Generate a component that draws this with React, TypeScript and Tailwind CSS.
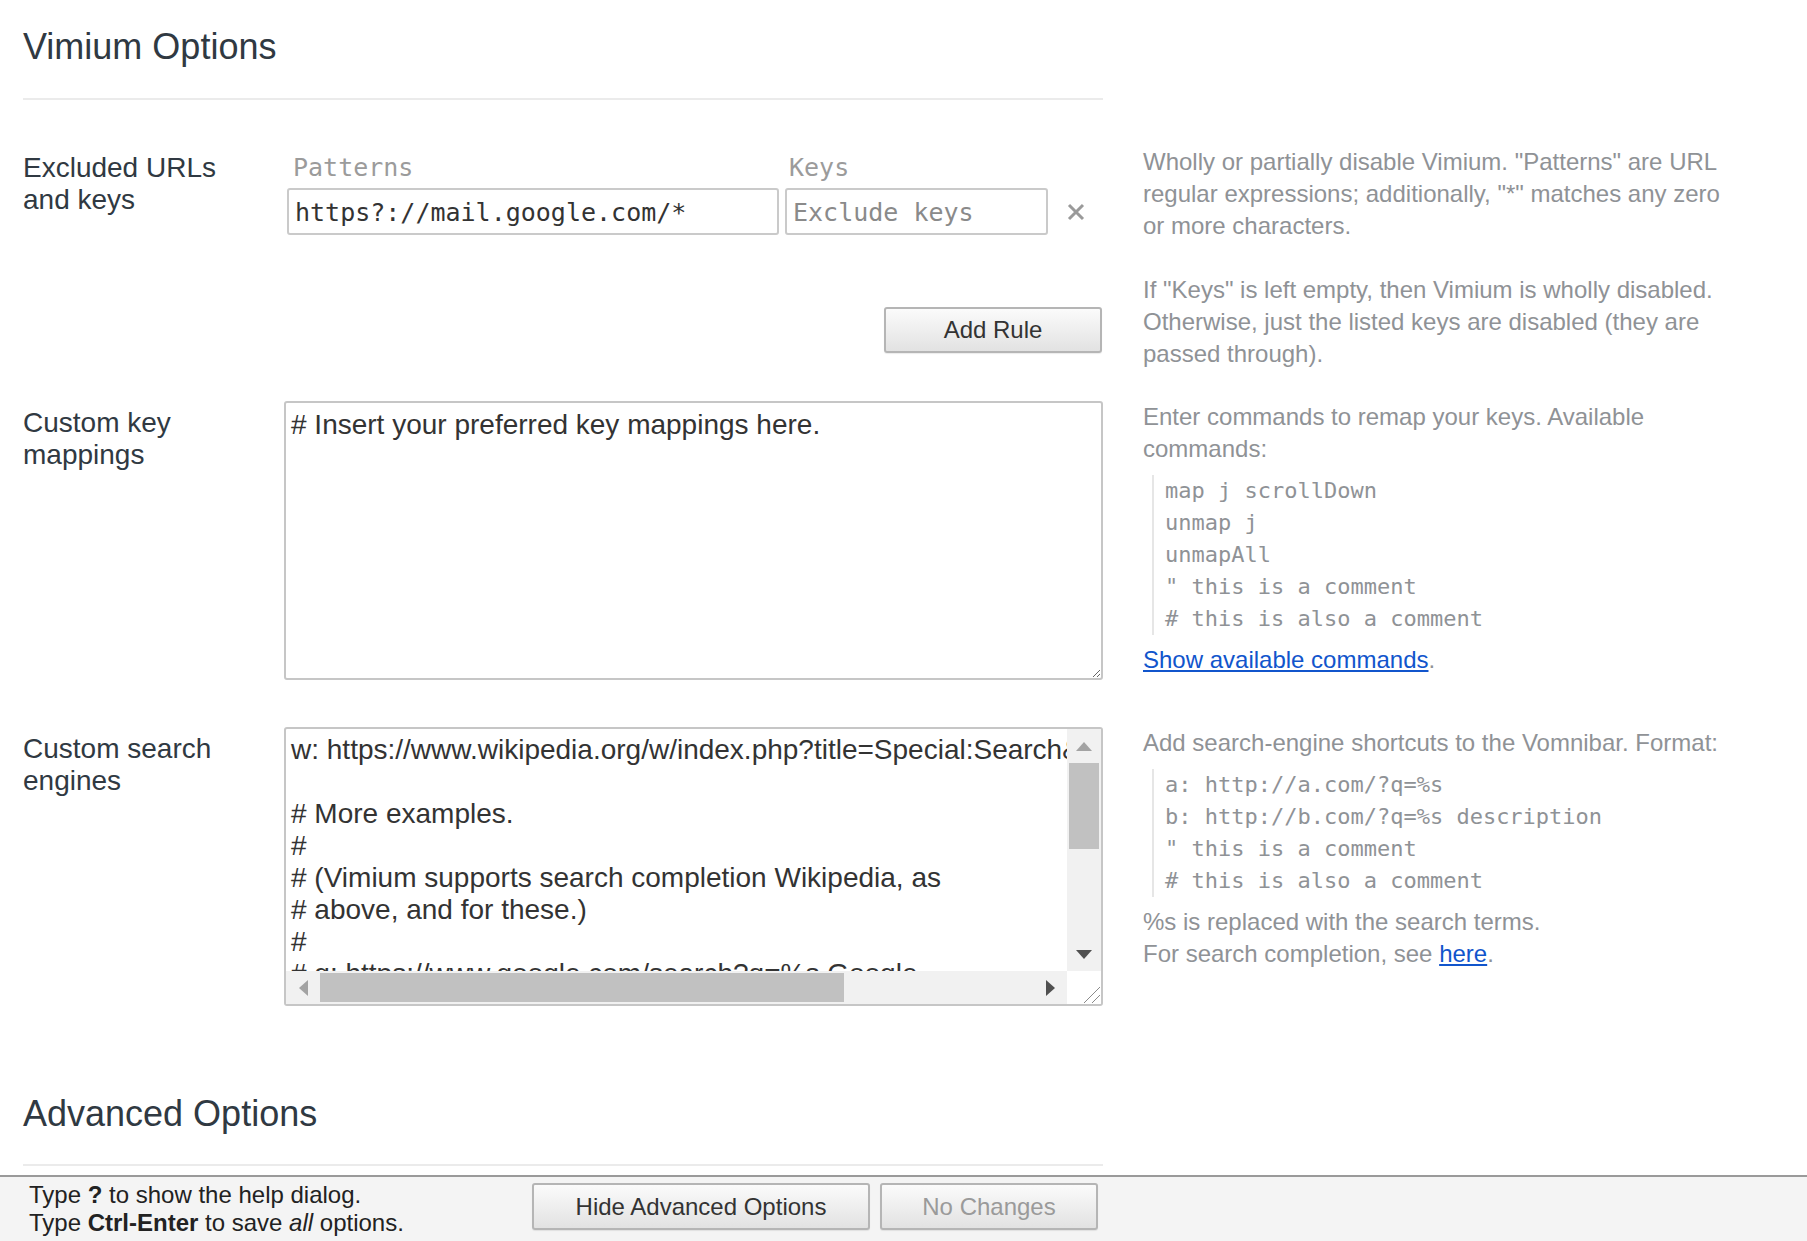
import React from "react";

const searchEngines = [
  "w: https://www.wikipedia.org/w/index.php?title=Special:Search&search=%s Wikipedia",
  "",
  "# More examples.",
  "#",
  "# (Vimium supports search completion Wikipedia, as",
  "# above, and for these.)",
  "#",
  "# g: https://www.google.com/search?q=%s Google",
  "# l: https://www.google.com/search?q=%s&btnI I'm feeling lucky...",
].join("\n");

function Tri({ dir, color }: { dir: "up" | "down" | "left" | "right"; color: string }) {
  const pts = {
    up: "0,9 8,0 16,9",
    down: "0,0 16,0 8,9",
    left: "9,0 9,16 0,8",
    right: "0,0 9,8 0,16",
  }[dir];
  const vertical = dir === "up" || dir === "down";
  return (
    <svg width={vertical ? 16 : 9} height={vertical ? 9 : 16} viewBox={vertical ? "0 0 16 9" : "0 0 9 16"}>
      <polygon points={pts} fill={color} />
    </svg>
  );
}

function SectionHeader({ title, className }: { title: string; className?: string }) {
  return (
    <div className={`w-[1080px] border-b-2 border-[#ebebeb] ${className ?? ""}`}>
      <h1 className="text-[36px] leading-[44px] text-[#303942]">{title}</h1>
    </div>
  );
}

function OptionRow({
  label,
  labelPad,
  help,
  children,
  className,
}: {
  label: string;
  labelPad: string;
  help: React.ReactNode;
  children: React.ReactNode;
  className?: string;
}) {
  return (
    <div className={`flex items-start ${className ?? ""}`}>
      <div className={`w-[261px] shrink-0 ${labelPad}`}>
        <div className="max-w-[225px] text-[28px] leading-[32px] text-[#303942]">{label}</div>
      </div>
      <div className="w-[819px] shrink-0">{children}</div>
      <div className="ml-[40px] w-[590px] shrink-0 pt-[1px] text-[24px] leading-[32px] text-[#8f9296]">{help}</div>
    </div>
  );
}

function Example({ lines }: { lines: string[] }) {
  return (
    <div className="mt-[10px] ml-[9px] border-l-2 border-[#e6e6e6] pl-[11px] font-['DejaVu_Sans_Mono',monospace] text-[22px] leading-[32px] text-[#8f9296] whitespace-pre">
      {lines.map((l) => (
        <div key={l}>{l}</div>
      ))}
    </div>
  );
}

const btn =
  "rounded-[3px] border-2 border-[#b5b5b5] bg-linear-to-b from-[#fbfbfb] to-[#e2e2e2] text-[24px] leading-none shadow-[0_1px_1px_rgba(0,0,0,0.08)]";

export default function App() {
  return (
    <div className="flex h-screen flex-col overflow-hidden bg-white font-['Liberation_Sans',Arial,sans-serif]">
      <main className="min-h-0 flex-1 overflow-hidden pl-[23px] pt-[25px]">
        <SectionHeader title="Vimium Options" className="pb-[29px]" />

        {/* Excluded URLs */}
        <OptionRow
          className="mt-[45px]"
          label="Excluded URLs and keys"
          labelPad="pt-[7px]"
          help={
            <>
              <p>
                Wholly or partially disable Vimium. "Patterns" are URL regular expressions; additionally, "*" matches
                any zero or more characters.
              </p>
              <p className="mt-[32px]">
                If "Keys" is left empty, then Vimium is wholly disabled. Otherwise, just the listed keys are disabled
                (they are passed through).
              </p>
            </>
          }
        >
          <div className="pt-[7px]">
            <div className="flex font-['DejaVu_Sans_Mono',monospace] text-[25px] leading-[32px] text-[#9b9b9b]">
              <div className="ml-[3px] w-[492px] pl-[6px]">Patterns</div>
              <div className="ml-[6px] pl-[4px]">Keys</div>
            </div>
            <div className="mt-[4px] flex items-center">
              <input
                readOnly
                defaultValue="https?://mail.google.com/*"
                className="ml-[3px] h-[47px] w-[492px] rounded-[3px] border-2 border-[#cacaca] px-[6px] pt-[2px] font-['DejaVu_Sans_Mono',monospace] text-[25px] text-[#333] outline-none"
              />
              <input
                readOnly
                placeholder="Exclude keys"
                className="ml-[6px] h-[47px] w-[263px] rounded-[3px] border-2 border-[#cacaca] px-[6px] pt-[2px] font-['DejaVu_Sans_Mono',monospace] text-[25px] text-[#333] outline-none placeholder:text-[#8a8a8a]"
              />
              <svg className="ml-[18px]" width="20" height="18" viewBox="0 0 20 18">
                <path d="M3 2 L17 16 M17 2 L3 16" stroke="#9a9a9a" strokeWidth="3" />
              </svg>
            </div>
            <div className="mt-[72px] flex justify-end pr-[1px]">
              <button className={`${btn} h-[46px] w-[218px] text-[#333]`}>Add Rule</button>
            </div>
          </div>
        </OptionRow>

        {/* Custom key mappings */}
        <OptionRow
          className="mt-[30px]"
          label="Custom key mappings"
          labelPad="pt-[7px]"
          help={
            <>
              <p>Enter commands to remap your keys. Available commands:</p>
              <Example
                lines={["map j scrollDown", "unmap j", "unmapAll", '" this is a comment', "# this is also a comment"]}
              />
              <p className="mt-[9px]">
                <a href="#" className="text-[#1155cc] underline">
                  Show available commands
                </a>
                .
              </p>
            </>
          }
        >
          <textarea
            readOnly
            defaultValue="# Insert your preferred key mappings here."
            className="mt-[1px] block h-[279px] w-[819px] rounded-[3px] border-2 border-[#c6c6c6] px-[5px] pt-[6px] text-[28px] leading-[32px] text-[#333] outline-none"
          />
        </OptionRow>

        {/* Custom search engines */}
        <OptionRow
          className="mt-[46px]"
          label="Custom search engines"
          labelPad="pt-[7px]"
          help={
            <>
              <p>Add search-engine shortcuts to the Vomnibar. Format:</p>
              <Example
                lines={[
                  "a: http://a.com/?q=%s",
                  "b: http://b.com/?q=%s description",
                  '" this is a comment',
                  "# this is also a comment",
                ]}
              />
              <p className="mt-[9px]">
                %s is replaced with the search terms.
                <br />
                For search completion, see{" "}
                <a href="#" className="text-[#1155cc] underline">
                  here
                </a>
                .
              </p>
            </>
          }
        >
          <div className="mt-[1px] flex h-[279px] w-[819px] flex-col overflow-hidden rounded-[3px] border-2 border-[#c6c6c6]">
            <div className="flex min-h-0 flex-1">
              <div className="min-w-0 flex-1 overflow-hidden whitespace-pre pl-[5px] pt-[5px] text-[28px] leading-[32px] text-[#333]">
                {searchEngines}
              </div>
              {/* vertical scrollbar */}
              <div className="flex w-[34px] shrink-0 flex-col bg-[#f1f1f1]">
                <div className="flex h-[34px] items-center justify-center">
                  <Tri dir="up" color="#a3a3a3" />
                </div>
                <div className="mx-[2px] h-[86px] bg-[#c1c1c1]" />
                <div className="flex-1" />
                <div className="flex h-[34px] items-center justify-center">
                  <Tri dir="down" color="#505050" />
                </div>
              </div>
            </div>
            {/* horizontal scrollbar */}
            <div className="flex h-[33px] shrink-0">
              <div className="flex flex-1 bg-[#f1f1f1]">
                <div className="flex w-[34px] items-center justify-center">
                  <Tri dir="left" color="#a3a3a3" />
                </div>
                <div className="my-[2px] w-[524px] bg-[#c1c1c1]" />
                <div className="flex-1" />
                <div className="flex w-[34px] items-center justify-center">
                  <Tri dir="right" color="#505050" />
                </div>
              </div>
              <div className="w-[34px] bg-white">
                <svg width="34" height="33" viewBox="0 0 34 33">
                  <path d="M17 32 L33 16 M25 32 L33 24" stroke="#8a8a8a" strokeWidth="1" />
                </svg>
              </div>
            </div>
          </div>
        </OptionRow>

        <SectionHeader title="Advanced Options" className="mt-[86px] pb-[28px]" />
      </main>

      <footer className="flex h-[66px] shrink-0 border-t-2 border-[#9a9a9a] bg-[#f4f4f4] pl-[29px]">
        <div className="w-[503px] pt-[4px] text-[24px] leading-[28px] text-[#222]">
          <div>
            Type <b>?</b> to show the help dialog.
          </div>
          <div>
            Type <b>Ctrl-Enter</b> to save <i>all</i> options.
          </div>
        </div>
        <div className="flex gap-[10px] pt-[6px]">
          <button className={`${btn} h-[47px] w-[338px] text-[#333]`}>Hide Advanced Options</button>
          <button className={`${btn} h-[47px] w-[218px] text-[#9a9a9a]`}>No Changes</button>
        </div>
      </footer>
    </div>
  );
}
